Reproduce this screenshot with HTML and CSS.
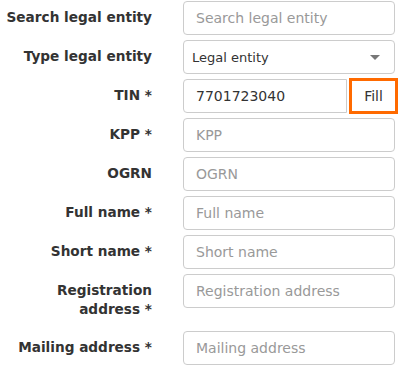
FILE: index.html
```html
<!DOCTYPE html>
<html>
<head>
<meta charset="utf-8">
<link rel="stylesheet" href="styles.css">
</head>
<body>
<form class="form">
  <label class="lbl">Search legal entity</label>
  <div class="ctl"><input class="inp" placeholder="Search legal entity"></div>

  <label class="lbl">Type legal entity</label>
  <div class="ctl"><div class="sel"><span class="sel-text">Legal entity</span><span class="caret"></span></div></div>

  <label class="lbl">TIN *</label>
  <div class="ctl group"><input class="inp inp-grp" value="7701723040"><button type="button" class="fill">Fill</button></div>

  <label class="lbl">KPP *</label>
  <div class="ctl"><input class="inp" placeholder="KPP"></div>

  <label class="lbl">OGRN</label>
  <div class="ctl"><input class="inp" placeholder="OGRN"></div>

  <label class="lbl">Full name *</label>
  <div class="ctl"><input class="inp" placeholder="Full name"></div>

  <label class="lbl">Short name *</label>
  <div class="ctl"><input class="inp" placeholder="Short name"></div>

  <label class="lbl">Registration address *</label>
  <div class="ctl"><input class="inp" placeholder="Registration address"></div>

  <label class="lbl">Mailing address *</label>
  <div class="ctl"><input class="inp" placeholder="Mailing address"></div>
</form>
</body>
</html>
```
FILE: styles.css
```css
html, body {
  margin: 0;
  padding: 0;
  background: #fff;
}
body {
  font-family: "DejaVu Sans", Verdana, sans-serif;
  color: #333;
}
.form {
  display: grid;
  grid-template-columns: 152px 212px;
  column-gap: 31px;
  row-gap: 5px;
  padding-top: 1px;
}
.lbl {
  font-size: 13.65px;
  font-weight: bold;
  text-align: right;
  line-height: 19px;
  padding: 7px 0;
  color: #333;
}
.ctl {
  display: flex;
  height: 34px;
}
.inp {
  box-sizing: border-box;
  width: 100%;
  height: 34px;
  border: 1px solid #ccc;
  border-radius: 4px;
  padding: 0 12px;
  font-family: "DejaVu Sans", Verdana, sans-serif;
  font-size: 14px;
  color: #333;
  background: #fff;
  outline: none;
}
.inp::placeholder {
  color: #999;
}
.sel {
  box-sizing: border-box;
  width: 100%;
  height: 34px;
  border: 1px solid #ccc;
  border-radius: 4px;
  padding: 0 14px 0 8px;
  display: flex;
  align-items: center;
  justify-content: space-between;
  font-size: 13px;
  color: #333;
}
.caret {
  width: 0;
  height: 0;
  border-left: 5px solid transparent;
  border-right: 5px solid transparent;
  border-top: 5px solid #777;
}
.group {
  width: 215px;
}
.inp-grp {
  width: 164px;
  flex: none;
  border-radius: 4px 0 0 4px;
}
.fill {
  box-sizing: border-box;
  flex: none;
  width: 49px;
  height: 36px;
  margin-top: -1px;
  margin-left: 2px;
  border: 3px solid #ff6a00;
  background: #fff;
  font-family: "DejaVu Sans", Verdana, sans-serif;
  font-size: 14px;
  color: #333;
  padding: 0;
}
```
